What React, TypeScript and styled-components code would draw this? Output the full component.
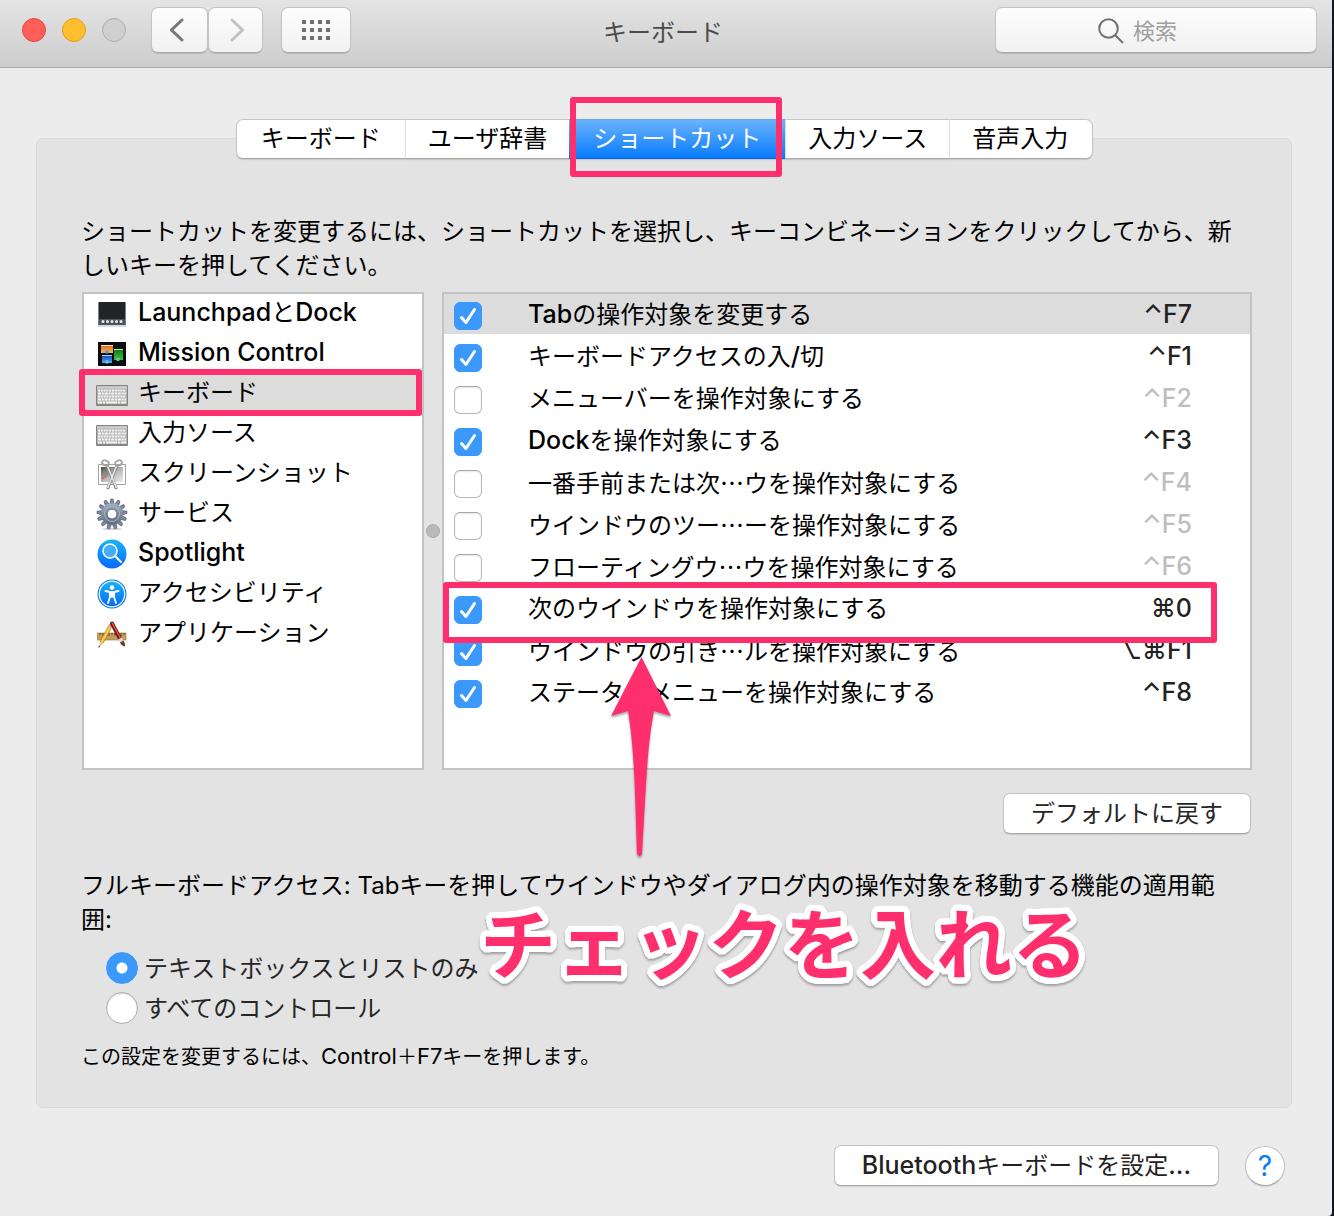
import React, { useState } from "react";
import styled, { createGlobalStyle, css } from "styled-components";

const PINK = "#ff2e6c";
const FONT = `Inter, "Noto Sans CJK JP", sans-serif`;

const GlobalStyle = createGlobalStyle`
  * { box-sizing: border-box; }
  body {
    margin: 0;
    background: #14171f;
    color: #000;
    font-family: ${FONT};
    font-size: 24px;
    line-height: 34px;
  }
  button, input { font: inherit; color: inherit; }
  p, ul, fieldset { margin: 0; padding: 0; border: 0; }
`;

const Window = styled.div`
  display: flex;
  flex-direction: column;
  min-height: 100vh;
  margin-right: 2px;
  background: #ececec;
  border-bottom-right-radius: 4px;
`;

const TitleBar = styled.header`
  display: flex;
  align-items: flex-start;
  height: 68px;
  padding: 7px 15px 0 22px;
  background: linear-gradient(#e4e4e4, #cdcdcd);
  border-bottom: 1px solid #a6a6a6;
`;

const Lights = styled.div`
  display: flex;
  gap: 16px;
  padding: 11px 25px 0 0;
`;

const Light = styled.button<{ $fill: string; $edge: string }>`
  width: 24px;
  height: 24px;
  padding: 0;
  border: 1px solid ${(p) => p.$edge};
  border-radius: 50%;
  background: ${(p) => p.$fill};
`;

const raised = css`
  border: 1px solid #c4c4c4;
  border-bottom-color: #a8a8a8;
  border-radius: 7px;
  box-shadow: 0 1px 1px rgba(0, 0, 0, 0.12);
`;

const ToolButton = styled.button<{ $width: number; $gap: number }>`
  ${raised}
  display: flex;
  align-items: center;
  justify-content: center;
  width: ${(p) => p.$width}px;
  height: 46px;
  margin-right: ${(p) => p.$gap}px;
  padding: 0;
  background: linear-gradient(#fdfdfd, #f1f1f1);
`;

const Title = styled.h1`
  flex: 1;
  margin: 0;
  padding: 9px 20px 0 0;
  color: #4b4b4b;
  font-size: 24px;
  font-weight: 400;
  line-height: 34px;
  text-align: center;
`;

const Search = styled.label`
  ${raised}
  display: flex;
  align-items: center;
  gap: 9px;
  width: 322px;
  height: 46px;
  padding: 2px 0 0 102px;
  background: linear-gradient(#fdfdfd, #f1f1f1);
`;

const SearchInput = styled.input`
  flex: 1;
  min-width: 0;
  padding: 0;
  border: 0;
  outline: 0;
  background: transparent;
  font-size: 22px;
  &::placeholder { color: #a0a0a0; opacity: 1; }
`;

const Content = styled.main`
  flex: 1;
  padding: 51px 40px 30px 36px;
`;

const Tabs = styled.div`
  position: relative;
  z-index: 1;
  display: flex;
  width: fit-content;
  margin: 0 auto -21px;
  padding-left: 1px;
`;

const Tab = styled.button<{ $active?: boolean }>`
  position: relative;
  height: 40px;
  padding: 0 22px;
  border: solid #c4c4c4;
  border-width: 1px 0;
  border-bottom-color: #a8a8a8;
  background: #fff;
  line-height: 36px;
  box-shadow: 0 1px 1px rgba(0, 0, 0, 0.12);
  & + & { border-left: 1px solid #dedede; }
  &:first-child {
    padding: 0 24px;
    border-left: 1px solid #c4c4c4;
    border-radius: 7px 0 0 7px;
  }
  &:last-child {
    padding: 0 24px 0 22px;
    border-right: 1px solid #c4c4c4;
    border-radius: 0 7px 7px 0;
  }
  ${(p) =>
    p.$active &&
    css`
      && {
        padding: 0 24px;
        border-color: #5fa9f5 transparent #0b61ef;
        border-left-width: 0;
        background: linear-gradient(#6cb4fa, #057aff) border-box;
        color: #fff;
      }
    `}
`;

const Marker = styled.span<{ $top: number; $right: number; $bottom: number; $left: number }>`
  position: absolute;
  z-index: 2;
  inset: ${(p) => `${p.$top}px ${p.$right}px ${p.$bottom}px ${p.$left}px`};
  border: 6px solid ${PINK};
  border-radius: 3px;
  pointer-events: none;
`;

const Panel = styled.section`
  position: relative;
  padding: 76px 39px 36px 44px;
  border: 1px solid #d9d9d9;
  border-radius: 7px;
  background: #e3e3e3;
`;

const Paragraph = styled.p`
  padding-right: 17px;
`;

const Lists = styled.div`
  display: flex;
  height: 478px;
  margin: 9px 0 23px 1px;
`;

const listBox = css`
  margin: 0;
  border: 2px solid #c3c3c3;
  background: #fff;
  list-style: none;
`;

const Categories = styled.ul`
  ${listBox}
  flex: 0 0 342px;
`;

const Category = styled.li<{ $selected?: boolean }>`
  position: relative;
  background: ${(p) => (p.$selected ? "#dcdcdc" : "transparent")};
`;

const CategoryButton = styled.button`
  display: flex;
  align-items: center;
  gap: 10px;
  width: 100%;
  height: 40px;
  padding: 0 0 2px 12px;
  border: 0;
  background: transparent;
  text-align: left;
  white-space: nowrap;
  svg { flex: none; margin-top: 2px; overflow: visible; }
`;

const Splitter = styled.div`
  display: flex;
  flex: 0 0 18px;
  align-items: center;
  justify-content: center;
  &::before {
    content: "";
    width: 12px;
    height: 12px;
    border: 1px solid #a9a9a9;
    border-radius: 50%;
    background: #bababa;
  }
`;

const Shortcuts = styled.ul`
  ${listBox}
  position: relative;
  display: flex;
  flex: 1;
  flex-direction: column;
  gap: 2px;
`;

const Shortcut = styled.li<{ $selected?: boolean }>`
  position: relative;
  display: flex;
  align-items: center;
  height: 40px;
  padding: 2px 58px 0 10px;
  background: ${(p) => (p.$selected ? "#dcdcdc" : "transparent")};
`;

const Check = styled.span`
  position: relative;
  flex: none;
  width: 28px;
  height: 28px;
  margin: 2px 46px 0 0;
  svg { position: absolute; inset: 0; pointer-events: none; }
`;

const CheckInput = styled.input`
  display: block;
  width: 28px;
  height: 28px;
  margin: 0;
  appearance: none;
  border: 1px solid #b9b9b9;
  border-top-color: #a6a6a6;
  border-radius: 6px;
  background: #fff;
  box-shadow: inset 0 1px 2px rgba(0, 0, 0, 0.1);
  &:checked {
    border-color: #3b97fb;
    background: #3b99fc;
    box-shadow: none;
  }
`;

const ShortcutLabel = styled.label`
  flex: 1;
  white-space: nowrap;
`;

const Ellipsis = styled.span`
  font-family: "Noto Sans CJK JP", sans-serif;
`;

const Latin = styled.span<{ $small: boolean }>`
  font-size: ${(p) => (p.$small ? 22 : 25)}px;
  font-weight: ${(p) => (p.$small ? 400 : 500)};
  line-height: 1;
`;

const Keys = styled.kbd<{ $off: boolean }>`
  color: ${(p) => (p.$off ? "#bebebe" : "#222")};
  font-family: ${FONT};
`;

const PushButton = styled.button<{ $color: string }>`
  ${raised}
  display: block;
  height: 41px;
  padding: 0 27px;
  background: #fff;
  color: ${(p) => p.$color};
  line-height: 36px;
`;

const PanelActions = styled.div`
  display: flex;
  justify-content: flex-end;
  margin-bottom: 35px;
  padding-right: 1px;
`;

const Radios = styled.fieldset`
  margin: 11px 0 15px 25px;
`;

const RadioRow = styled.label`
  display: flex;
  align-items: center;
  gap: 6px;
  height: 40px;
  color: #262626;
`;

const RadioText = styled.span`
  padding-top: 2px;
`;

const Radio = styled.input`
  width: 32px;
  height: 32px;
  margin: 0;
  appearance: none;
  border: 1px solid #acacac;
  border-radius: 50%;
  background: #fff;
  box-shadow: inset 0 1px 2px rgba(0, 0, 0, 0.15);
  &:checked {
    border-color: #3b97fb;
    background: radial-gradient(circle, #fff 5px, #3b99fc 6px);
    box-shadow: none;
  }
`;

const Note = styled.p`
  font-size: 20px;
  line-height: 28px;
`;

const Arrow = styled.svg`
  position: absolute;
  top: 363px;
  left: 167px;
  z-index: 3;
  overflow: visible;
  filter: drop-shadow(0 2px 1px rgba(0, 0, 0, 0.35));
  pointer-events: none;
`;

const OUTLINE = [6, 3]
  .flatMap((radius) =>
    Array.from({ length: 32 }, (_, i) => {
      const angle = (i * Math.PI) / 16;
      return `${(radius * Math.cos(angle)).toFixed(2)}px ${(radius * Math.sin(angle)).toFixed(2)}px 0 #fff`;
    }),
  )
  .join(", ");

const Callout = styled.strong`
  position: absolute;
  top: 761px;
  left: 443px;
  color: ${PINK};
  font-family: "Noto Sans CJK JP", sans-serif;
  font-size: 76px;
  font-weight: 700;
  line-height: 80px;
  white-space: nowrap;
  text-shadow: ${OUTLINE};
  filter: drop-shadow(0 2px 1px rgba(0, 0, 0, 0.3));
  pointer-events: none;
`;

const Footer = styled.footer`
  display: flex;
  justify-content: flex-end;
  gap: 26px;
  padding: 37px 7px 0 0;
`;

const Help = styled.button`
  width: 40px;
  height: 40px;
  margin-top: 1px;
  padding: 0;
  border: 1px solid #c4c4c4;
  border-bottom-color: #a8a8a8;
  border-radius: 50%;
  background: #fff;
  box-shadow: 0 1px 1px rgba(0, 0, 0, 0.12);
  color: #0a7bff;
  font-size: 28px;
  line-height: 36px;
`;

const DockIcon = () => (
  <svg width="32" height="32" viewBox="0 0 32 32" aria-hidden="true">
    <rect x="2" y="5" width="28" height="24" fill="#d5dce1" />
    <rect x="2.500" y="4" width="27" height="23" fill="#232425" />
    <path d="M3.500 21h25l1 6h-27z" fill="#4b545d" />
    {[7, 11.500, 16, 20.500, 25].map((x) => (
      <circle key={x} cx={x} cy="23.500" r="1.500" fill="#dfeaf2" />
    ))}
  </svg>
);

const MissionIcon = () => (
  <svg width="32" height="32" viewBox="0 0 32 32" aria-hidden="true">
    <defs>
      <linearGradient id="mo" x2="0" y2="1"><stop stopColor="#d76a16" /><stop offset="1" stopColor="#ffb35c" /></linearGradient>
      <linearGradient id="mb" x2="0" y2="1"><stop stopColor="#123d9e" /><stop offset="1" stopColor="#4fb0ff" /></linearGradient>
      <linearGradient id="mg" x2="0" y2="1"><stop stopColor="#0a7a12" /><stop offset="1" stopColor="#3fc23a" /></linearGradient>
    </defs>
    <rect x="2" y="4" width="28" height="24" fill="#0b0c0e" />
    <rect x="5" y="7" width="12" height="8" fill="url(#mo)" />
    <path d="M5 7.500h12" stroke="#ffe0b5" />
    <rect x="6" y="17" width="10" height="8" fill="url(#mb)" />
    <path d="M6 17.500h10" stroke="#a9d5ff" />
    <rect x="18" y="11" width="9" height="11" fill="url(#mg)" />
    <path d="M18 11.500h9" stroke="#a7efa0" />
    <circle cx="11" cy="14" r="1.800" fill="#4a98df" />
    <circle cx="11" cy="24" r="1.800" fill="#71bdf5" />
    <circle cx="22" cy="21.500" r="1.800" fill="#65bfcb" />
  </svg>
);

const KeyboardIcon = () => (
  <svg width="32" height="32" viewBox="0 0 32 32" aria-hidden="true">
    <rect x="0" y="7" width="32" height="21" rx="1" fill="#858585" />
    <rect x="1" y="8" width="30" height="18" fill="#b4b4b4" />
    <path d="M1 9.500h30" stroke="#cfcfcf" strokeWidth="2" />
    <path d="M2 12.500h28M2 18.500h28" stroke="#f6f6f6" strokeWidth="2" strokeDasharray="2 .8" />
    <path d="M2 15.500h28M2 21.500h28" stroke="#f6f6f6" strokeWidth="2" strokeDasharray="3 .8 2 .8" />
    <path d="M2 24.500h4M7 24.500h2M10 24.500h11M22 24.500h2M25 24.500h5" stroke="#f0f0f0" strokeWidth="2" />
  </svg>
);

const ScreenshotIcon = () => (
  <svg width="32" height="32" viewBox="0 0 32 32" aria-hidden="true">
    <defs>
      <linearGradient id="sh" x2="1" y2="1"><stop stopColor="#4a4a4a" /><stop offset=".5" stopColor="#b7b7b7" /><stop offset="1" stopColor="#ededed" /></linearGradient>
    </defs>
    <rect x="2.500" y="6.500" width="27" height="20" fill="#fff" stroke="#a5a5a5" />
    <rect x="5" y="9" width="22" height="15" fill="url(#sh)" />
    <path d="M9 18l5-4" stroke="#58a966" strokeWidth="2" />
    <path d="M6 21l5-4" stroke="#d47065" strokeWidth="2" />
    <path d="M11 7l9.500 24M21 7l-9.500 24" stroke="#858585" strokeWidth="3" />
    <path d="M11 7l9.500 23M21 7l-9.500 23" stroke="#ececec" strokeWidth="1.500" />
    <ellipse cx="9.500" cy="5" rx="3.500" ry="2.500" fill="none" stroke="#a2a2a2" strokeWidth="1.800" transform="rotate(25 9.500 5)" />
    <ellipse cx="22.500" cy="5" rx="3.500" ry="2.500" fill="none" stroke="#a2a2a2" strokeWidth="1.800" transform="rotate(-25 22.500 5)" />
  </svg>
);

const GearIcon = () => (
  <svg width="32" height="32" viewBox="0 0 32 32" aria-hidden="true">
    <defs>
      <linearGradient id="ge" x2="0" y2="1"><stop stopColor="#a4afc4" /><stop offset="1" stopColor="#626c80" /></linearGradient>
    </defs>
    <ellipse cx="16" cy="31" rx="10" ry="1" fill="#d0d0d0" />
    <g fill="#7f8a9f" stroke="#566074" strokeWidth=".7">
      {Array.from({ length: 13 }, (_, i) => (
        <path key={i} d="M14 6l.8-5h2.400l.8 5z" transform={`rotate(${(i * 360) / 13} 16 16)`} />
      ))}
    </g>
    <circle cx="16" cy="16" r="10.800" fill="url(#ge)" />
    <circle cx="16" cy="16" r="7.500" fill="none" stroke="#a5b0c4" />
    <circle cx="16" cy="16" r="5" fill="#fff" stroke="#566074" />
  </svg>
);

const SpotlightIcon = () => (
  <svg width="32" height="32" viewBox="0 0 32 32" aria-hidden="true">
    <defs>
      <linearGradient id="sp" x2="0" y2="1"><stop stopColor="#16b4fb" /><stop offset="1" stopColor="#0869fc" /></linearGradient>
    </defs>
    <circle cx="16" cy="16" r="14.500" fill="url(#sp)" />
    <circle cx="14" cy="13" r="7" fill="#45aefa" stroke="#fff" strokeWidth="1.500" />
    <path d="M19 18l6 6" stroke="#fff" strokeWidth="2" strokeLinecap="round" />
  </svg>
);

const AccessIcon = () => (
  <svg width="32" height="32" viewBox="0 0 32 32" aria-hidden="true">
    <circle cx="16" cy="16" r="14.500" fill="#0b76d9" />
    <circle cx="16" cy="16" r="12.800" fill="url(#sp)" stroke="#fff" strokeWidth="1.200" />
    <circle cx="16" cy="9.500" r="2.300" fill="#fff" />
    <path d="M9.500 13l4.500 1v5l-2 6M22.500 13l-4.500 1v5l2 6" fill="none" stroke="#fff" strokeWidth="1.800" strokeLinecap="round" strokeLinejoin="round" />
    <path d="M13.500 13h5v6.500h-5z" fill="#fff" />
  </svg>
);

const AppsIcon = () => (
  <svg width="32" height="32" viewBox="0 0 32 32" aria-hidden="true">
    <rect x="1.500" y="15" width="28.500" height="7" fill="#c39a60" stroke="#9b7440" strokeWidth=".6" />
    <path d="M4 15v2M7 15v3M10 15v2M13 15v3M16 15v2M19 15v3M22 15v2M25 15v3M28 15v2" stroke="#62451f" />
    <path d="M14 9L5.500 24.500" stroke="#b98218" strokeWidth="4" />
    <path d="M14 9L5.500 24.500" stroke="#ffd04b" strokeWidth="2.500" />
    <path d="M15.500 10l-3.500-2 1.500-2.500q2-1 3.200 1z" fill="#e995b5" />
    <path d="M3.700 23.500l3.600 2L2.500 30z" fill="#e9c79b" />
    <path d="M2.500 30l.4-2.300 1.300 .8z" fill="#333" />
    <path d="M16 5.500l8 15" stroke="#6d1a14" strokeWidth="4" strokeLinecap="round" />
    <path d="M16.500 5.500l8 15" stroke="#dd5a45" strokeWidth="1.500" strokeLinecap="round" />
    <path d="M22 21.500l4-2 1.500 3-3.500 2z" fill="#d6dadd" />
    <path d="M24 24.500l3.500-2q2 3 1.500 6-4-1-5-4z" fill="#6a4020" />
  </svg>
);

const CATEGORIES: { name: string; Icon: () => React.JSX.Element }[] = [
  { name: "LaunchpadとDock", Icon: DockIcon },
  { name: "Mission Control", Icon: MissionIcon },
  { name: "キーボード", Icon: KeyboardIcon },
  { name: "入力ソース", Icon: KeyboardIcon },
  { name: "スクリーンショット", Icon: ScreenshotIcon },
  { name: "サービス", Icon: GearIcon },
  { name: "Spotlight", Icon: SpotlightIcon },
  { name: "アクセシビリティ", Icon: AccessIcon },
  { name: "アプリケーション", Icon: AppsIcon },
];

const SHORTCUTS: { name: string; keys: string; on: boolean }[] = [
  { name: "Tabの操作対象を変更する", keys: "⌃F7", on: true },
  { name: "キーボードアクセスの入/切", keys: "⌃F1", on: true },
  { name: "メニューバーを操作対象にする", keys: "⌃F2", on: false },
  { name: "Dockを操作対象にする", keys: "⌃F3", on: true },
  { name: "一番手前または次…ウを操作対象にする", keys: "⌃F4", on: false },
  { name: "ウインドウのツー…ーを操作対象にする", keys: "⌃F5", on: false },
  { name: "フローティングウ…ウを操作対象にする", keys: "⌃F6", on: false },
  { name: "次のウインドウを操作対象にする", keys: "⌘0", on: true },
  { name: "ウインドウの引き…ルを操作対象にする", keys: "⌥⌘F1", on: true },
  { name: "ステータスメニューを操作対象にする", keys: "⌃F8", on: true },
];

const TABS = ["キーボード", "ユーザ辞書", "ショートカット", "入力ソース", "音声入力"];

/* Sets Latin runs slightly larger than the kana and centres the Japanese ellipsis. */
function Mixed({ text, small = false }: { text: string; small?: boolean }) {
  return (
    <span>
      {text.split(/([\x20-\x7e⌃⌘⌥]+|…)/).map((run, i) => {
        if (i % 2 === 0) return run;
        return run === "…" ? <Ellipsis key={i}>{run}</Ellipsis> : <Latin key={i} $small={small}>{run}</Latin>;
      })}
    </span>
  );
}

export default function App() {
  const [checked, setChecked] = useState(SHORTCUTS.map((s) => s.on));
  const [access, setAccess] = useState("text");
  const toggle = (index: number) =>
    setChecked((list) => list.map((on, i) => (i === index ? !on : on)));

  return (
    <Window lang="ja">
      <GlobalStyle />
      <TitleBar>
        <Lights>
          <Light aria-label="閉じる" $fill="#ff5f58" $edge="#e2463f" />
          <Light aria-label="しまう" $fill="#ffbe2e" $edge="#e09e20" />
          <Light aria-label="拡大" $fill="#cfcfcf" $edge="#adadad" />
        </Lights>
        <ToolButton aria-label="戻る" $width={57} $gap={0}>
          <svg width="20" height="26" viewBox="0 0 20 26" fill="none" stroke="#777" strokeWidth="3" strokeLinecap="round">
            <path d="M12 3L1.500 13 12 23" />
          </svg>
        </ToolButton>
        <ToolButton aria-label="進む" $width={55} $gap={18}>
          <svg width="20" height="26" viewBox="0 0 20 26" fill="none" stroke="#c2c2c2" strokeWidth="3" strokeLinecap="round">
            <path d="M6 3l10.500 10L6 23" />
          </svg>
        </ToolButton>
        <ToolButton aria-label="すべてを表示" $width={70} $gap={0}>
          <svg width="28" height="20" viewBox="0 0 28 20" fill="#707070">
            {[0, 8, 16].map((y) => [0, 8, 16, 24].map((x) => <rect key={`${x}-${y}`} x={x} y={y} width="4" height="4" />))}
          </svg>
        </ToolButton>
        <Title>キーボード</Title>
        <Search>
          <svg width="26" height="26" viewBox="0 0 26 26" fill="none" stroke="#717171" strokeWidth="2">
            <circle cx="10.500" cy="10.500" r="9.300" />
            <path d="M17 17l8 8" />
          </svg>
          <SearchInput type="text" placeholder="検索" aria-label="検索" />
        </Search>
      </TitleBar>

      <Content>
        <Tabs role="tablist">
          {TABS.map((name, i) => (
            <Tab key={name} role="tab" aria-selected={i === 2} $active={i === 2}>
              {name}
              {i === 2 && <Marker $top={-23} $right={3} $bottom={-19} $left={1} />}
            </Tab>
          ))}
        </Tabs>

        <Panel>
          <Paragraph>
            ショートカットを変更するには、ショートカットを選択し、キーコンビネーションをクリックしてから、新しいキーを押してください。
          </Paragraph>

          <Lists>
            <Categories>
              {CATEGORIES.map(({ name, Icon }, i) => (
                <Category key={name} $selected={i === 2}>
                  <CategoryButton>
                    <Icon />
                    <Mixed text={name} />
                  </CategoryButton>
                  {i === 2 && <Marker $top={-5} $right={0} $bottom={-2} $left={-5} />}
                </Category>
              ))}
            </Categories>
            <Splitter />
            <Shortcuts>
              {SHORTCUTS.map(({ name, keys }, i) => (
                <Shortcut key={name} $selected={i === 0}>
                  <Check>
                    <CheckInput type="checkbox" id={`shortcut-${i}`} checked={checked[i]} onChange={() => toggle(i)} />
                    {checked[i] && (
                      <svg width="28" height="28" viewBox="0 0 28 28" fill="none" stroke="#fff" strokeWidth="3" strokeLinecap="round" strokeLinejoin="round">
                        <path d="M7.500 15.500l4.500 5L20.500 7.500" />
                      </svg>
                    )}
                  </Check>
                  <ShortcutLabel htmlFor={`shortcut-${i}`}>
                    <Mixed text={name} />
                  </ShortcutLabel>
                  <Keys $off={!checked[i]}>
                    <Mixed text={keys} />
                  </Keys>
                  {i === 7 && <Marker $top={-6} $right={33} $bottom={-15} $left={-1} />}
                </Shortcut>
              ))}
              <Arrow as="svg" width="60" height="202" viewBox="0 0 60 202" aria-hidden="true">
                <path d="M30.500 0L60 59 43 54C36 90 35 130 31 197q-2.500 4-5 0C24 130 23 90 17 54L0 59z" fill={PINK} />
              </Arrow>
            </Shortcuts>
          </Lists>

          <PanelActions>
            <PushButton $color="#262626">デフォルトに戻す</PushButton>
          </PanelActions>

          <Paragraph id="access-title">
            フルキーボードアクセス: Tabキーを押してウインドウやダイアログ内の操作対象を移動する機能の適用範囲:
          </Paragraph>
          <Radios aria-labelledby="access-title">
            <RadioRow>
              <Radio type="radio" name="access" checked={access === "text"} onChange={() => setAccess("text")} />
              <RadioText>テキストボックスとリストのみ</RadioText>
            </RadioRow>
            <RadioRow>
              <Radio type="radio" name="access" checked={access === "all"} onChange={() => setAccess("all")} />
              <RadioText>すべてのコントロール</RadioText>
            </RadioRow>
          </Radios>
          <Note>
            <Mixed text="この設定を変更するには、Control＋F7キーを押します。" small />
          </Note>
          <Callout>チェックを入れる</Callout>
        </Panel>

        <Footer>
          <PushButton $color="#222">
            <Mixed text="Bluetoothキーボードを設定..." />
          </PushButton>
          <Help aria-label="ヘルプ">?</Help>
        </Footer>
      </Content>
    </Window>
  );
}
